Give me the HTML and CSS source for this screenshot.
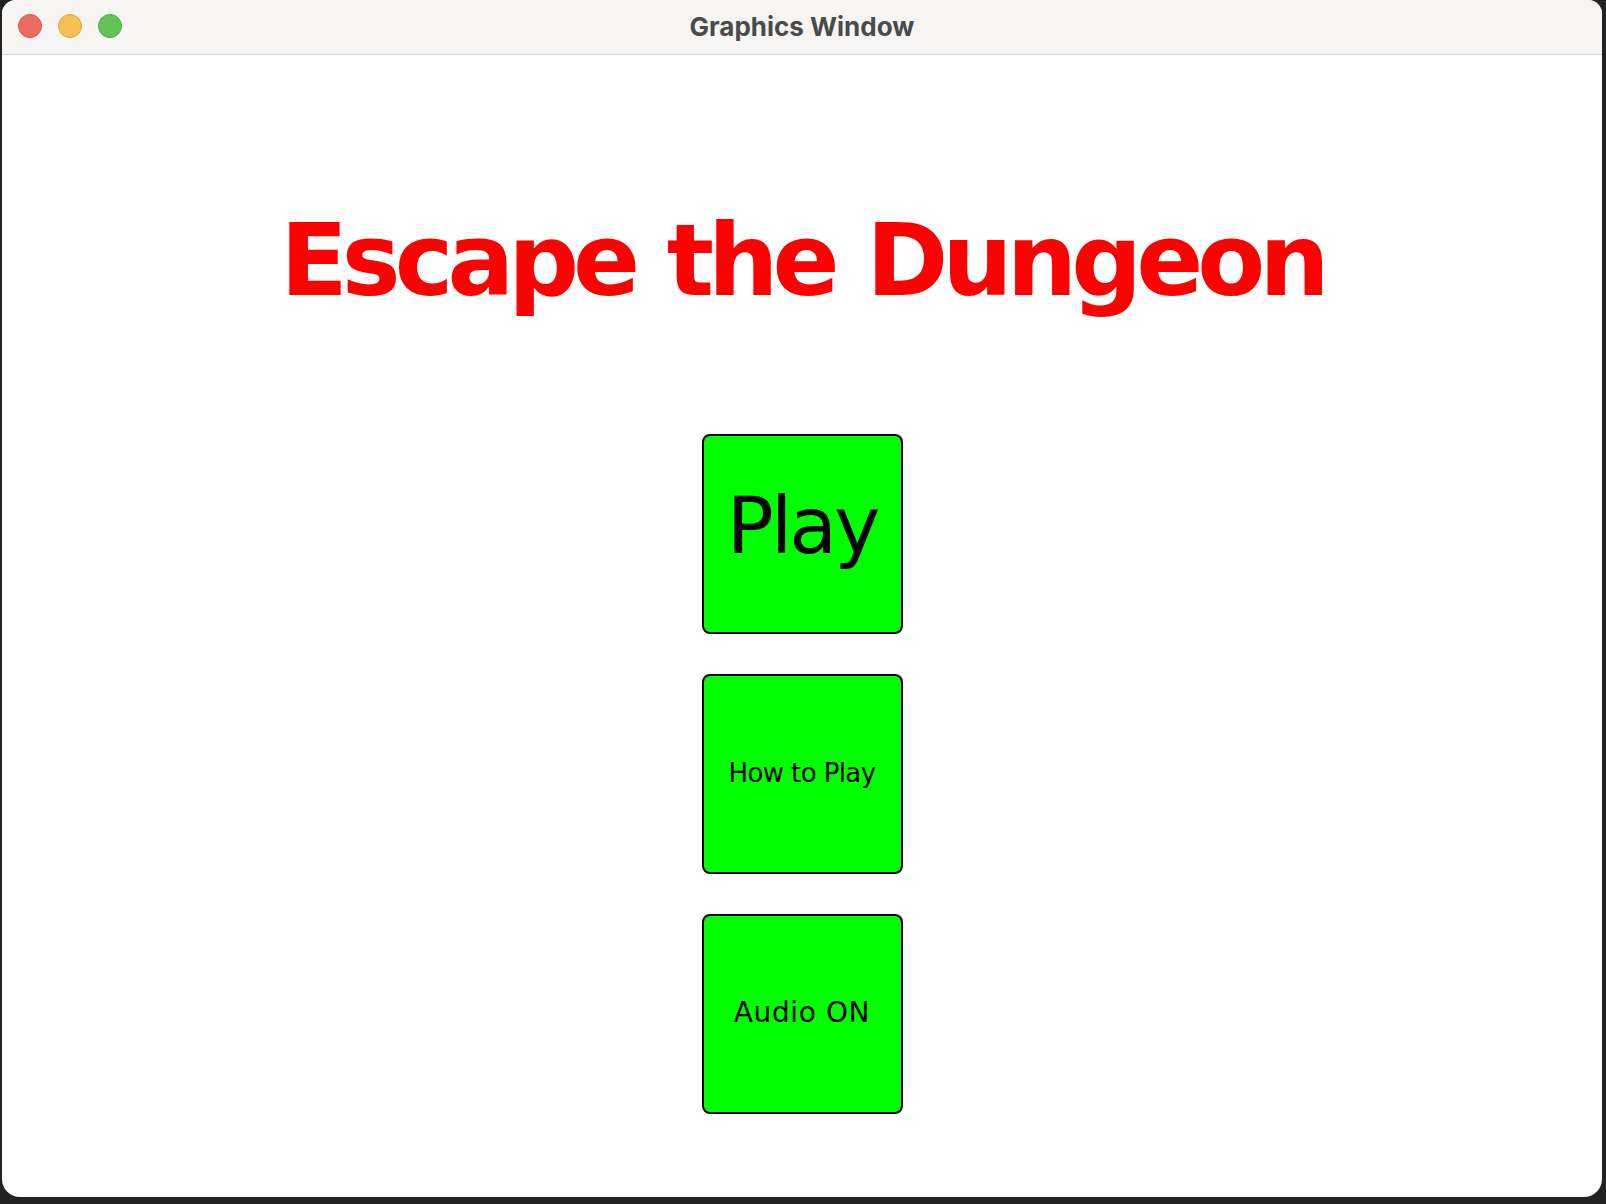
FILE: index.html
```html
<!DOCTYPE html>
<html lang="en">
<head>
    <meta charset="UTF-8">
    <meta name="viewport" content="width=device-width, initial-scale=1.0">
    <title>Graphics Window</title>
    <link rel="stylesheet" href="styles.css">
</head>
<body>
    <div class="window">
        <div class="titlebar">
            <div class="lights">
                <span class="light red"></span>
                <span class="light yellow"></span>
                <span class="light green"></span>
            </div>
            <div class="window-title">Graphics Window</div>
        </div>
        <div class="canvas">
            <h1 class="game-title">Escape the Dungeon</h1>
            <div class="menu">
                <button class="menu-button big">Play</button>
                <button class="menu-button howto">How to Play</button>
                <button class="menu-button audio">Audio ON</button>
            </div>
        </div>
    </div>
</body>
</html>
```

FILE: styles.css
```css
body {
    margin: 0;
    background-color: #222;
    font-family: "DejaVu Sans", "Liberation Sans", sans-serif;
}

.window {
    margin: 0 4px 0 2px;
    height: 1197px;
    background-color: #fff;
    border-radius: 14px 14px 18px 18px;
    overflow: hidden;
    display: flex;
    flex-direction: column;
}

.titlebar {
    position: relative;
    height: 54px;
    background-color: #f6f5f4;
    border-bottom: 1px solid #d6d6d6;
    display: flex;
    align-items: center;
    justify-content: center;
}

.lights {
    position: absolute;
    left: 16px;
    top: 14px;
    display: flex;
    gap: 16px;
}

.light {
    width: 24px;
    height: 24px;
    border-radius: 50%;
    box-sizing: border-box;
}

.red {
    background-color: #ee6a5f;
    border: 1px solid #d8574c;
}

.yellow {
    background-color: #f5c04f;
    border: 1px solid #d9a43c;
}

.green {
    background-color: #60c554;
    border: 1px solid #4eab42;
}

.window-title {
    font-family: Inter, "Open Sans", sans-serif;
    font-weight: 700;
    font-size: 26px;
    color: #4a4a4a;
    padding-bottom: 2px;
}

.canvas {
    flex: 1;
    display: flex;
    flex-direction: column;
    align-items: center;
}

.game-title {
    margin: 156px 0 0;
    font-size: 99px;
    line-height: 1;
    font-weight: 700;
    letter-spacing: -6px;
    word-spacing: 4px;
    color: #ff0000;
}

.menu {
    margin-top: 124px;
    display: flex;
    flex-direction: column;
    gap: 40px;
}

.menu-button {
    width: 201px;
    height: 200px;
    box-sizing: border-box;
    background-color: #00ff00;
    border: 2px solid #000;
    border-radius: 8px;
    padding: 0 0 3px;
    font-family: "DejaVu Sans", "Liberation Sans", sans-serif;
    font-size: 26px;
    line-height: 1;
    color: #000;
    display: flex;
    align-items: center;
    justify-content: center;
}

.menu-button.big {
    font-size: 78px;
    letter-spacing: -3px;
    padding-bottom: 16px;
}

.menu-button.howto {
    letter-spacing: -0.6px;
}

.menu-button.audio {
    font-size: 28px;
    letter-spacing: 0.6px;
    padding-bottom: 2px;
}
```
